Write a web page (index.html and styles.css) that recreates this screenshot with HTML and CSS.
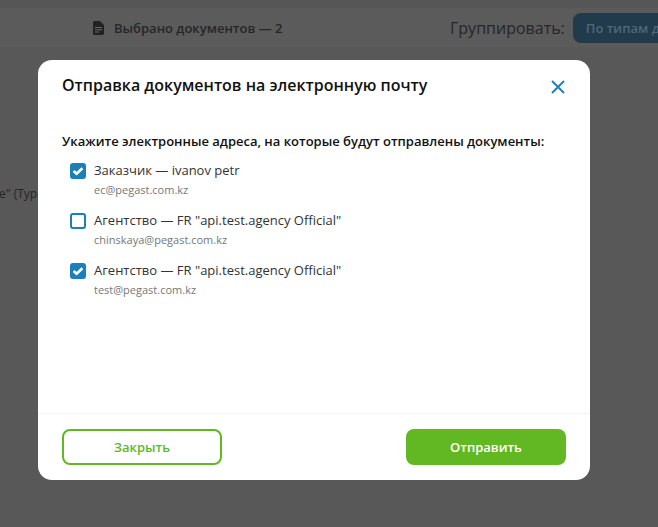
FILE: index.html
```html
<!DOCTYPE html>
<html lang="ru">
<head>
<meta charset="utf-8">
<title>Отправка документов</title>
<link rel="stylesheet" href="styles.css">
</head>
<body>
<div class="page">
  <div class="toolbar">
    <svg class="doc-icon" width="11" height="14" viewBox="0 0 11 14"><path d="M0 1.500A1.500 1.500 0 0 1 1.500 0H7l4 4v8.500A1.500 1.500 0 0 1 9.500 14h-8A1.500 1.500 0 0 1 0 12.500Z" fill="#222"/><path d="M2 6.500h7M2 8.800h7M2 11h4" stroke="#6a6a6a" stroke-width="1"/></svg>
    <span class="selected">Выбрано документов — 2</span>
    <span class="group-label">Группировать:</span>
    <span class="group-btn">По типам документов</span>
  </div>
  <div class="behind">e" (Type</div>
</div>
<div class="modal">
  <div class="modal-head">
    <h2 class="title">Отправка документов на электронную почту</h2>
    <svg class="close" width="16" height="16" viewBox="0 0 16 16"><path d="M2 2l12 12M14 2L2 14" stroke="#1a7fbd" stroke-width="1.900" fill="none"/></svg>
  </div>
  <div class="modal-body">
    <p class="lead">Укажите электронные адреса, на которые будут отправлены документы:</p>
    <div class="opt">
      <span class="box checked"><svg width="12" height="10" viewBox="0 0 12 10"><path d="M1.600 5l3 2.700 5.800-5.400" stroke="#fff" stroke-width="2.600" fill="none"/></svg></span>
      <div><div class="name">Заказчик — ivanov petr</div><div class="mail">ec@pegast.com.kz</div></div>
    </div>
    <div class="opt">
      <span class="box"></span>
      <div><div class="name">Агентство — FR "api.test.agency Official"</div><div class="mail">chinskaya@pegast.com.kz</div></div>
    </div>
    <div class="opt">
      <span class="box checked"><svg width="12" height="10" viewBox="0 0 12 10"><path d="M1.600 5l3 2.700 5.800-5.400" stroke="#fff" stroke-width="2.600" fill="none"/></svg></span>
      <div><div class="name">Агентство — FR "api.test.agency Official"</div><div class="mail">test@pegast.com.kz</div></div>
    </div>
  </div>
  <div class="modal-foot">
    <button class="btn outline">Закрыть</button>
    <button class="btn solid">Отправить</button>
  </div>
</div>
</body>
</html>
```
FILE: styles.css
```css
* { box-sizing: border-box; }
html, body { margin: 0; height: 100%; overflow: hidden; }
body { background: #585858; font-family: "Open Sans", sans-serif; color: #111; width: 658px; height: 527px; position: relative; }
.page { height: 100%; }
.toolbar { display: flex; align-items: center; margin-top: 0; border-top: 8px solid #565656; background: #5b5b5b; padding: 5px 0 4px 93px; height: 47px; white-space: nowrap; overflow: hidden; }
.doc-icon { margin-right: 10px; flex: none; }
.selected { font-size: 13px; font-weight: 600; color: #262626; width: 336px; flex: none; }
.group-label { font-size: 16px; color: #262626; margin-right: 7px; flex: none; }
.group-btn { background: #213b4c; color: #4e6878; font-size: 13px; font-weight: 600; height: 30px; line-height: 30px; padding: 0 10px 0 13px; border-radius: 8px; flex: none; margin-left: 1px; }
.behind { position: absolute; left: 0; top: 185px; font-size: 12px; color: #262626; margin-left: -1px; }
.modal { position: absolute; left: 38px; top: 60px; width: 552px; height: 420px; background: #fff; border-radius: 14px; display: flex; flex-direction: column; }
.modal-head { display: flex; justify-content: space-between; align-items: flex-start; padding: 15px 24px 0; height: 50px; }
.title { margin: 0; font-size: 16px; font-weight: 600; line-height: 20px; color: #111; }
.close { flex: none; margin-top: 4px; }
.modal-body { flex: 1; padding: 22px 24px 0; }
.lead { margin: 0 0 5px; font-size: 13px; font-weight: 600; line-height: 18px; color: #111; }
.opt { display: flex; gap: 8px; padding-left: 8px; height: 50px; padding-top: 6px; }
.box { width: 16px; height: 16px; border: 2px solid #1a7fbd; border-radius: 3px; display: flex; align-items: center; justify-content: center; flex: none; margin-top: 2px; }
.box.checked { background: #1a7fbd; }
.name { font-size: 13px; line-height: 18px; color: #333; }
.mail { font-size: 11px; line-height: 15px; margin-top: 3px; color: #777; }
.modal-foot { display: flex; justify-content: space-between; align-items: center; height: 67px; padding: 0 24px; border-top: 1px solid #eef5fa; }
.btn { width: 160px; height: 36px; border-radius: 8px; font-family: inherit; font-size: 13px; font-weight: 600; padding: 0; }
.outline { background: #fff; border: 2px solid #62b822; color: #62b822; }
.solid { background: #62b822; border: 0; color: #fff; }
```
